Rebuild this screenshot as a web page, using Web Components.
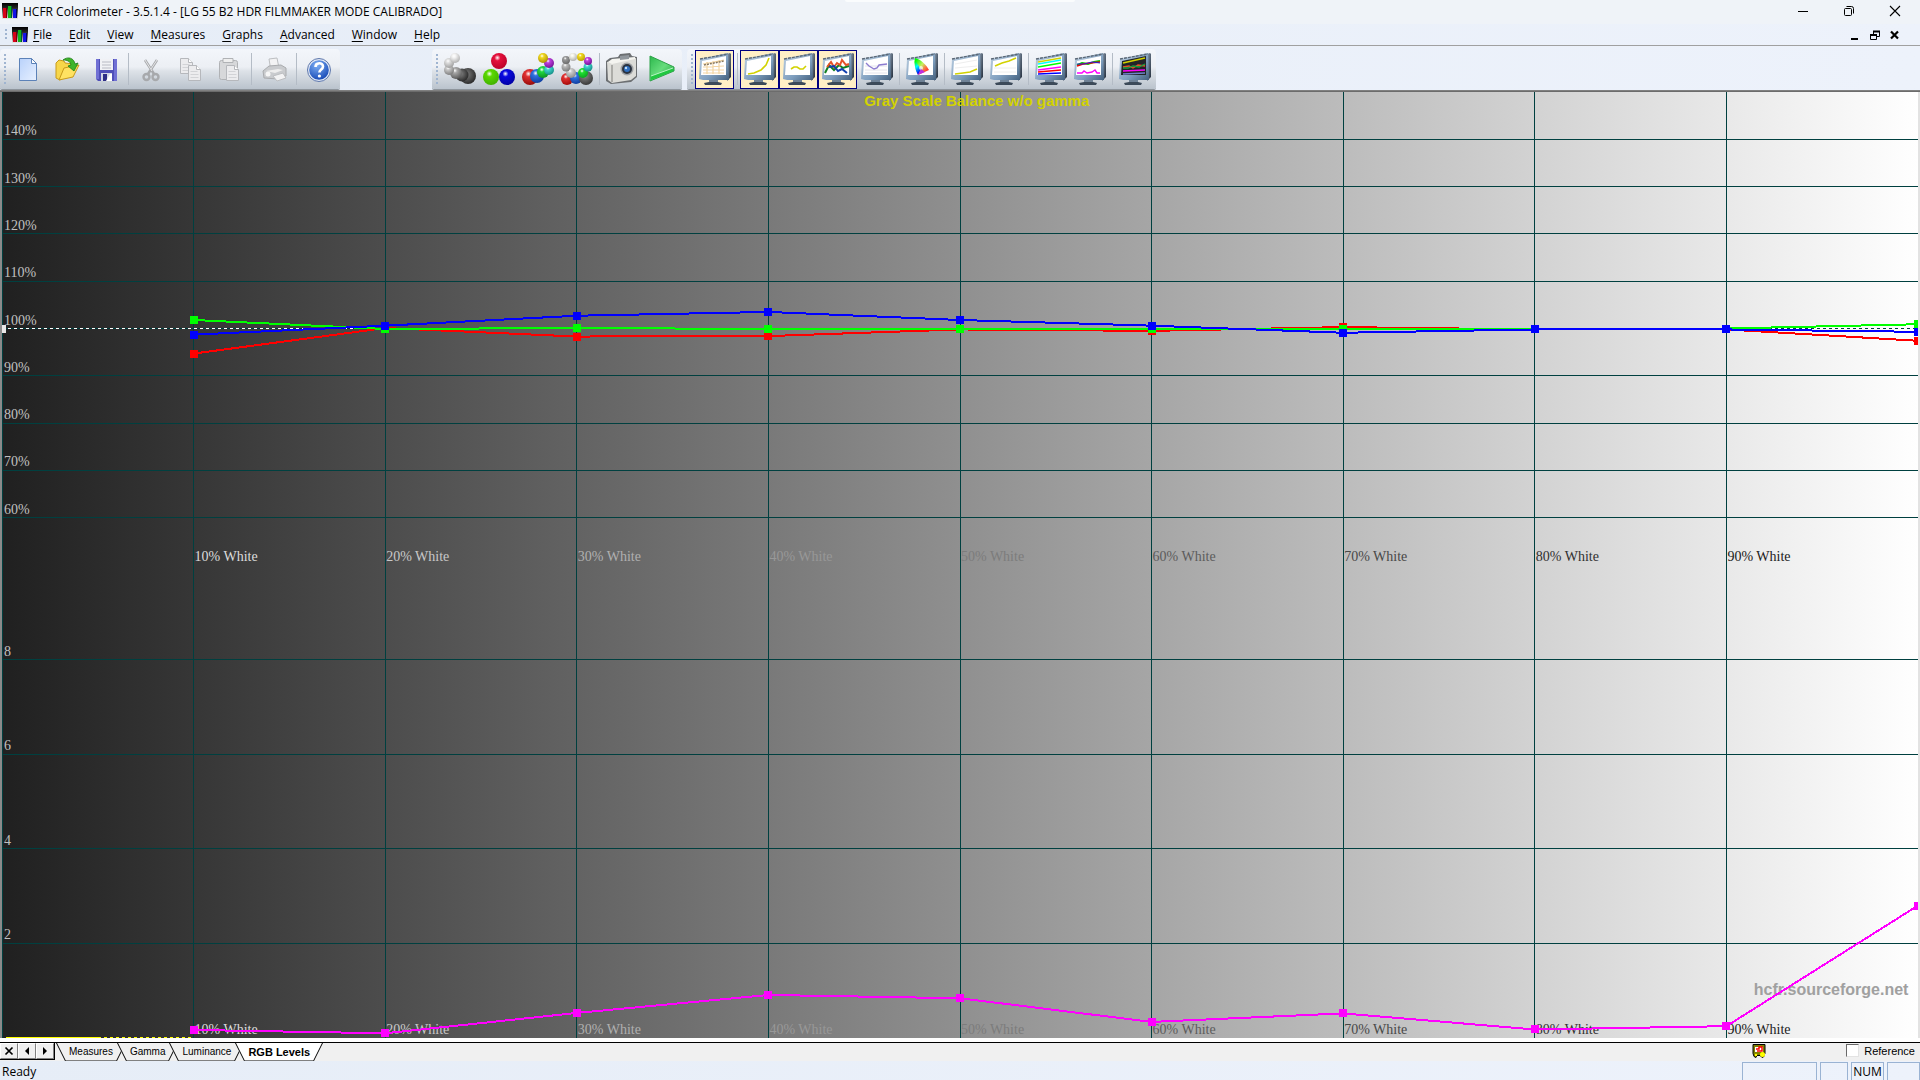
<!DOCTYPE html>
<html lang="en">
<head>
<meta charset="utf-8">
<title>HCFR Colorimeter</title>
<style>
  html, body { height: 100%; margin: 0; }
  body { font: 12px/16px "Open Sans", sans-serif; color: #000; background: #ebf1fa; }
</style>
</head>
<body>
<hc-app></hc-app>
<script>
const define = (name, html, setup) => {
  const tpl = document.createElement('template');
  tpl.innerHTML = html;
  customElements.define(name, class extends HTMLElement {
    connectedCallback() {
      if (this.shadowRoot) return;
      this.attachShadow({ mode: 'open' }).append(tpl.content.cloneNode(true));
      if (setup) setup(this, this.shadowRoot);
    }
  });
};

/* ---------- icons ---------- */
const ball = (x, y, r, c, d) => {
  const id = 'b' + c.slice(1) + d.slice(1);
  return `<radialGradient id="${id}" cx=".4" cy=".3" r=".75"><stop offset="0" stop-color="#fff"/><stop offset=".25" stop-color="${c}"/><stop offset="1" stop-color="${d}"/></radialGradient><circle cx="${x}" cy="${y}" r="${r}" fill="url(#${id})"/>`;
};
const line = (pts, c, w = 1.3) => `<polyline points="${pts}" fill="none" stroke="${c}" stroke-width="${w}"/>`;
const monitor = (inner, bg = '#fff') => `
  <linearGradient id="bz" x2="1" y2="1"><stop offset="0" stop-color="#c3d4e4"/><stop offset=".6" stop-color="#7f9fbf"/><stop offset="1" stop-color="#44617e"/></linearGradient>
  <linearGradient id="sd" x2="1" y2="1"><stop offset="0" stop-color="#8b9caf"/><stop offset="1" stop-color="#1f2a38"/></linearGradient>
  <path d="M5 30l5-1v-3h9v3l4 1-1 2H6z" fill="#3c4a59"/><path d="M10 26h9v3h-9z" fill="#6f8296"/>
  <path d="M28 1l3-1 1 1v23l-4 4z" fill="url(#sd)"/>
  <path d="M1 6L29 0l1 27H4L0 26z" fill="url(#bz)"/>
  <path d="M1 6L29 1" stroke="#5b6876" stroke-width="1.4" stroke-dasharray="3 1"/>
  <path d="M3 8l24-5v19H2z" fill="${bg}"/>${inner}`;
const page = (x, y) => `<path d="M${x} ${y}h8l4 4v11h-12z" fill="#ececee" stroke="#b6b8bc"/><path d="M${x + 8} ${y}v4h4" fill="#fff" stroke="#b6b8bc"/><path d="M${x + 2} ${y + 6}h7M${x + 2} ${y + 9}h8M${x + 2} ${y + 12}h8" stroke="#d2d3d6"/>`;
const ICONS = {
  logo: ['0 0 16 16', `<linearGradient id="g" x2="0" y2="1"><stop offset="0"/><stop offset=".3" stop-color="#222"/><stop offset="1" stop-color="#e8e8e8"/></linearGradient><path d="M0 0h16v16H0z" fill="url(#g)"/><path d="M1 5h4v10H1z" fill="#d80018"/><path d="M4 5h1v10H4z" fill="#700"/><path d="M6 3h4v12H6z" fill="#12b41c"/><path d="M9 3h1v12H9z" fill="#053"/><path d="M11 6h4v9h-4z" fill="#1414e6"/><path d="M14 6h1v9h-1z" fill="#006"/>`],
  'new': ['0 0 32 32', `<linearGradient id="g" x2="1" y2="1"><stop offset="0" stop-color="#b9d2fb"/><stop offset="1" stop-color="#e7f0ff"/></linearGradient><path d="M7.500 5.500h12l5 5v17h-17z" fill="url(#g)" stroke="#5c82b8"/><path d="M19.500 5.500v5h5z" fill="#fff" stroke="#5c82b8"/>`],
  open: ['0 0 32 32', `<path d="M5 10l3-3 5 1 1 2 9 1v5L9 27l-4-2z" fill="#f7d64a" stroke="#c79a1a"/><path d="M8 27l5-12 15-3-6 12z" fill="#ffe262" stroke="#c79a1a"/><path d="M12 7c5-4 11-2 12 4l3-1-4 8-6-5 3-1c-1-4-4-5-8-5z" fill="#3fb52b" stroke="#1d7d15" stroke-width=".8"/>`],
  save: ['0 0 32 32', `<path d="M6 6h21v22H8l-2-2z" fill="#4f4fb8"/><path d="M6 6h3v20H6zM24 6h3v22h-3z" fill="#7070d4"/><path d="M10 6h13v11H10z" fill="#f0f1f5"/><path d="M12 9h9M12 12h9M12 15h9" stroke="#b8bac4"/><path d="M11 20h11v8H11z" fill="#d4d8e6"/><path d="M13 21h4v7h-4z" fill="#2e2e86"/><path d="M16 28l4-7h2v7z" fill="#fff"/>`],
  cut: ['0 0 32 32', `<g fill="none" stroke="#a7a9ac"><path d="M10 7l9 14M22 7l-9 14" stroke-width="2.600"/><circle cx="11.500" cy="24" r="3" stroke-width="2.400"/><circle cx="20.500" cy="24" r="3" stroke-width="2.400"/></g><path d="M10 7l7 11M22 7l-6 9" stroke="#e6e6e8"/>`],
  copy: ['0 0 32 32', page(6.500, 5.500) + page(14.500, 12.500)],
  paste: ['0 0 32 32', `<rect x="6.500" y="7.500" width="18" height="19" rx="2" fill="#d7d8da" stroke="#b0b2b5"/><path d="M10 5.500h10v4H10z" fill="#eee" stroke="#b0b2b5"/>` + page(13.500, 12.500)],
  print: ['0 0 32 32', `<path d="M11 6l8-1 2 10-8 3z" fill="#f3f3f4" stroke="#bcbec1"/><path d="M5 18l6-5 12-1 5 3v8l-8 3-14-1z" fill="#c9cbce" stroke="#a9abae"/><path d="M8 18l12-2 5 1-8 3z" fill="#eee"/><circle cx="10" cy="21" r="2.500" fill="#f6f6f6"/><path d="M15 23l10-3 3 5-9 3z" fill="#f3f3f4" stroke="#bcbec1"/>`],
  help: ['0 0 32 32', `<radialGradient id="g" cx=".4" cy=".25" r=".8"><stop offset="0" stop-color="#7fb0f5"/><stop offset="1" stop-color="#1547b4"/></radialGradient><circle cx="16" cy="17" r="11.500" fill="#dfe7f5" stroke="#5f78ac"/><circle cx="16" cy="17" r="9.800" fill="url(#g)"/><path d="M12.500 14c0-5 7.500-5 7.500-.5 0 3-3.600 3-3.600 6" fill="none" stroke="#fff" stroke-width="2.600"/><circle cx="16.400" cy="23" r="1.600" fill="#fff"/>`],
  gray: ['0 0 32 32', `<radialGradient id="dk" cx=".4" cy=".4" r=".7"><stop offset="0" stop-color="#808080"/><stop offset="1" stop-color="#202020"/></radialGradient><circle cx="24" cy="23" r="8" fill="url(#dk)"/><circle cx="18" cy="22" r="6.500" fill="url(#dk)"/>` + ball(12, 20, 6, '#a8a8a8', '#555555') + ball(5, 17, 5, '#c8c8c8', '#777777') + ball(5, 10, 5, '#dedede', '#999999') + ball(11, 5, 5, '#f2f2f2', '#aaaaaa')],
  rgb: ['0 0 32 32', ball(16, 8, 8, '#e4103c', '#b80028') + ball(8, 24, 8, '#5ad800', '#3fae00') + ball(24, 24, 8, '#0808e0', '#0000a0')],
  sat: ['0 0 32 32', ball(8, 24, 8, '#e03030', '#900808') + ball(15, 23, 7, '#3070e0', '#0b3a9c') + ball(21, 19, 6, '#20d840', '#0a8c20') + ball(27, 17, 5, '#40d8d0', '#128880') + ball(27, 10, 5, '#c040e0', '#701090') + ball(21, 5, 5, '#f0d820', '#a88c00')],
  ring: ['0 0 32 32', ball(6, 26, 6, '#e03030', '#a00808') + ball(15, 25, 6, '#3070e0', '#0b3a9c') + ball(25, 25, 7, '#777777', '#333333') + ball(10, 20, 5, '#cccccc', '#888888') + ball(22, 20, 5, '#20e030', '#0aa020') + ball(5, 14, 4.500, '#b8b8b8', '#777777') + ball(27, 14, 4.500, '#40d8d0', '#128880') + ball(5, 7, 4, '#999999', '#666666') + ball(27, 8, 4, '#c040e0', '#701090') + ball(12, 4, 4, '#f2f2e8', '#aaaaaa') + ball(20, 4, 4, '#f0d820', '#b89c00')],
  camera: ['0 0 32 32', `<path d="M0 8l4-3 8-1 2-3 10-1 2 3 5 1v20l-6 5-20 2-5-3z" fill="#6c6f72"/><path d="M1 9l29-4v18l-5 4-19 3-4-3z" fill="#dcdcd8"/><path d="M2 9l4-3 23-2v2L6 11z" fill="#f4f4f0"/><path d="M6 12v17" stroke="#9c9c98" stroke-width="1.500"/><path d="M14 3l9-1v4l-9 1z" fill="#90969c"/><circle cx="21" cy="16" r="6.500" fill="#9ea1a4"/><circle cx="21" cy="16" r="5" fill="#2a3340"/><circle cx="21" cy="16" r="3" fill="#2e6fc0"/><circle cx="20" cy="15" r="1.200" fill="#bfe0ff"/>`],
  play: ['0 0 32 32', `<linearGradient id="g" x2="1" y2="1"><stop offset="0" stop-color="#2cb84c"/><stop offset=".5" stop-color="#66dc7c"/><stop offset="1" stop-color="#14a034"/></linearGradient><path d="M5 3l24 11v4L5 28z" fill="url(#g)" stroke="#2da348"/><path d="M6 23l22-8v3L6 27z" fill="#20c840"/><path d="M6 23l22-8" stroke="#b8f4c4"/>`],
  m1: ['0 0 32 32', monitor(`<path d="M4 11l21-4M4 14l21-1M4 17h21M4 20h21M8 9v12M14 8v13M20 7v14" stroke="#f3d6a4" stroke-width="1.200"/><path d="M5 12l20-4" stroke="#8a7a60" stroke-width="1.500" stroke-dasharray="2 1"/>`)],
  m2: ['0 0 32 32', monitor(line('4,21 10,20 17,17 22,12 25,5', '#d2d200', 1.600))],
  m3: ['0 0 32 32', monitor(line('8,16 11,14 14,14 17,16 20,16 23,13', '#d2d200', 1.600))],
  m4: ['0 0 32 32', monitor(line('3,20 7,12 12,17 17,12 21,15 27,13', '#108020', 2) + line('5,14 9,9 12,14 15,10 18,12 20,7 24,12 27,11', '#e65228', 2) + line('7,14 12,13 16,18 20,16 25,20', '#1040b0', 2))],
  m5: ['0 0 32 32', monitor(`<path d="M4 13h22M4 17h22M4 20h22" stroke="#e4e4ec"/>` + line('5,10 8,13 13,16 16,15 18,12 26,11', '#8c7cd0', 1.400))],
  m6: ['0 0 32 32', monitor(`<linearGradient id="c1" x2="1" y2="1"><stop offset=".1" stop-color="#0f0"/><stop offset=".45" stop-color="#c8f060"/><stop offset=".7" stop-color="#ff6040"/><stop offset="1" stop-color="#f00"/></linearGradient><linearGradient id="c2" x2=".3" y2="1"><stop offset=".2" stop-color="#0f0"/><stop offset=".55" stop-color="#0ff"/><stop offset="1" stop-color="#00f"/></linearGradient><path d="M9 5c6 1 12 8 14 12l-11 5C9 17 8 10 9 5z" fill="url(#c1)"/><path d="M9 5c1 5 4 8 6 11l-3 6C9 17 8 10 9 5z" fill="url(#c2)"/><circle cx="15" cy="15" r="2" fill="#fff" opacity=".7"/><path d="M12 22l3-6 4 3z" fill="#c030e0"/>`)],
  m7: ['0 0 32 32', monitor(`<path d="M4 11l22-4M4 15l22-2" stroke="#eee"/>` + line('4,21 12,20 19,19 26,16', '#d2d200', 1.600))],
  m8: ['0 0 32 32', monitor(`<path d="M4 15h22M4 19h22" stroke="#eee"/>` + line('5,13 12,10 19,8 26,5', '#d2d200', 1.600))],
  m9: ['0 0 32 32', monitor(line('3,9 26,5', '#d2d200') + line('3,11 26,7', '#0ff') + line('3,14 26,10', '#0f0') + line('3,17 26,14', '#f0f') + line('3,19 26,17', '#f00') + line('3,21 26,20', '#00f'))],
  m10: ['0 0 32 32', monitor(line('3,12 8,10 14,11 20,9 26,8', '#0c0', 1.800) + line('3,13 9,11 16,10 26,9', '#e00', 1.500) + line('3,11 10,11 18,9 26,10', '#22d', 1) + line('3,20 8,20 10,18 13,20 18,19 21,17 23,20 26,20', '#f0f', 1.400))],
  m11: ['0 0 32 32', monitor(line('4,10 26,5', '#d2d200', 1.500) + line('4,14 10,13 14,15 19,12 26,13', '#e65228') + line('4,15 9,15 14,13 20,14 26,11', '#18a040') + line('4,18 26,17', '#f0f') + line('4,21 26,20', '#7080d0'), '#222428')],
  min: ['0 0 12 12', `<path d="M1 6.500h10" stroke="#000"/>`],
  max: ['0 0 12 12', `<rect x="1.500" y="3.500" width="7" height="7" rx="1" fill="none" stroke="#000"/><path d="M3.500 1.500h5q2 0 2 2v5" fill="none" stroke="#000"/>`],
  close: ['0 0 12 12', `<path d="M1 1l10 10M11 1L1 11" stroke="#000" stroke-width="1.100"/>`],
  cmin: ['0 0 12 12', `<path d="M2 10h7" stroke="#000" stroke-width="2"/>`],
  cmax: ['0 0 12 12', `<path d="M4.500 6V2.500h6v5H8M1.500 5.500h6v5h-6z" fill="none" stroke="#000"/><path d="M4 2.500h7M1 6h7" stroke="#000" stroke-width="2"/>`],
  cclose: ['0 0 12 12', `<path d="M2 2.500l7 7M9 2.500l-7 7" stroke="#000" stroke-width="2.200"/>`],
  tx: ['0 0 12 12', `<path d="M2.500 2.500l7 7M9.500 2.500l-7 7" stroke="#000" stroke-width="1.700"/>`],
  tl: ['0 0 12 12', `<path d="M8 2v8L4 6z"/>`],
  tr: ['0 0 12 12', `<path d="M4 2v8l4-4z"/>`],
  chip: ['0 0 14 14', `<path d="M1 .5h12v9l-1 1v2l-2 1-2-2H5l-1 2-2-1-1-3z" fill="#808000" stroke="#000"/><path d="M3 3h8v5H3z" fill="#fff"/><path d="M4 5h3V3h3v4H5" fill="none" stroke="#f00" stroke-width="1.500"/><circle cx="10.500" cy="10.500" r="2.500" fill="#ff0"/><circle cx="4" cy="11" r="1.200" fill="#ff0"/>`]
};
define('hc-icon', `<style>:host{display:block;flex:none;width:32px;height:32px}svg{display:block;width:100%;height:100%}</style>`, (el, root) => {
  const [box, art] = ICONS[el.getAttribute('name')];
  root.innerHTML += `<svg viewBox="${box}" aria-hidden="true">${art}</svg>`;
});

/* ---------- title bar and menu bar ---------- */
define('hc-window-buttons', `<style>
  :host{display:flex;align-items:center}
  button{border:0;background:none;padding:0;width:46px;height:20px;display:grid;place-items:center}
  hc-icon{width:12px;height:12px}
  :host([small]) button{width:20px}
</style><button aria-label="Minimize"></button><button aria-label="Restore"></button><button aria-label="Close"></button>`, (el, root) => {
  const p = el.hasAttribute('small') ? 'c' : '';
  ['min', 'max', 'close'].forEach((n, i) => root.querySelectorAll('button')[i].innerHTML = `<hc-icon name="${p + n}"></hc-icon>`);
});
define('hc-title-bar', `<style>
  :host{display:flex;align-items:center;height:24px;box-sizing:border-box;padding-left:2px;background:#eff3f8;position:relative}
  :host::before{content:"";position:absolute;top:0;left:44%;right:44%;height:2px;border-radius:0 0 8px 8px;background:#fafcfd}
  .logo{width:16px;height:16px;margin-bottom:2px}
  span{flex:1;padding-left:5px;white-space:nowrap}
  hc-window-buttons{margin:0 2px 2px 0}
</style><hc-icon class="logo" name="logo"></hc-icon><span><slot></slot></span><hc-window-buttons></hc-window-buttons>`);
define('hc-menu-bar', `<style>
  :host{display:flex;align-items:center;height:22px;box-sizing:border-box;border-bottom:1px solid #a0a0a0;padding-left:5px;background:linear-gradient(90deg,#e6edf7,#edf2fb)}
  i{width:2px;height:12px;margin-right:5px;background:repeating-linear-gradient(#9fb4d0 0 2px,transparent 2px 4px)}
  .logo{width:16px;height:16px;margin-right:5px}
  nav{display:flex;gap:17px;flex:1}
  button{border:0;background:none;padding:0;font:inherit;color:inherit}
  u{text-underline-offset:2px}
  hc-window-buttons{margin-right:15px}
</style><i></i><hc-icon class="logo" name="logo"></hc-icon><nav></nav><hc-window-buttons small></hc-window-buttons>`, (el, root) => {
  root.querySelector('nav').innerHTML = el.getAttribute('items').split(',').map(t => `<button><u>${t[0]}</u>${t.slice(1)}</button>`).join('');
});

/* ---------- tool bars ---------- */
define('hc-tool-band', `<style>
  :host{display:flex;align-items:center;height:40px;padding:0 2px 0 8px;border-radius:4px 4px 2px 2px;background:linear-gradient(#f3f6fb,#eceff4 45%,#dde2e8 55%,#bac3cd);box-shadow:0 1px #8e959c;position:relative}
  :host::before{content:"";position:absolute;left:4px;top:5px;width:2px;height:30px;background:repeating-linear-gradient(#9fb4d0 0 2px,transparent 2px 4px)}
  button{box-sizing:border-box;width:39px;height:39px;padding:0;border:1px solid transparent;background:none;display:grid;place-items:center}
  button.on{border-color:#000080;background:#ffefc6}
  hr{width:1px;height:32px;margin:0 2px 0 3px;border:0;background:#b4bcc6;flex:none}
</style>`, (el, root) => {
  root.innerHTML += el.getAttribute('tools').split(' ').map(t => {
    if (t === '|') return '<hr>';
    const on = t.endsWith('*'), n = t.replace('*', '');
    return `<button class="${on ? 'on' : ''}" aria-label="${n}"><hc-icon name="${n}"></hc-icon></button>`;
  }).join('');
});
define('hc-tool-bar', `<style>:host{display:flex;height:45px;box-sizing:border-box;padding-top:3px;background:linear-gradient(90deg,#e6edf7,#edf2fb);border-bottom:1px solid #808080}
  ::slotted(.apart){margin-left:92px} ::slotted(.next){margin-left:5px}</style><slot></slot>`);

/* ---------- chart ---------- */
define('hc-level-chart', `<style>
  :host{display:block;flex:1;min-height:0;padding:0 2px;border-top:1px solid #6c6c6c;background:linear-gradient(90deg,#8a8a8a 50%,#e3e3e3 50%)}
  svg{display:block;width:100%;height:100%;background:linear-gradient(90deg,#202020,#fff);font:14px "Liberation Serif",serif;shape-rendering:crispEdges}
  .grid line{stroke:#004040}
  .axis{fill:#c0c0c0}
  .bold{font:bold 16px "Liberation Sans",sans-serif}
  .title{font-size:15px}
</style>`, (el, root) => {
  const X = i => i * 10 + '%';
  const level = v => (150 - v) / 2 + '%';
  const delta = v => 100 - v * 5 + '%';
  const series = [
    ['#f00', level, [94.7, 100.1, 98.3, 98.4, 99.8, 99.5, 100.3, 99.8, 99.8, 97.4]],
    ['#0f0', level, [101.8, 99.9, 100.1, 99.9, 99.9, 99.9, 100, 100, 100, 100.9]],
    ['#00f', level, [98.7, 100.6, 102.7, 103.5, 101.8, 100.6, 99.1, 99.8, 99.8, 99.3]],
    ['#f0f', delta, [.17, .1, .53, .91, .84, .34, .52, .18, .25, 2.8]]
  ];
  const inks = ['#dcdcdc', '#c8c8c8', '#b0b0b0', '#989898', '#7c7c7c', '#5c5c5c', '#484848', '#303030', '#202020'];
  let g = '<g class="grid"><line x1="0" x2="0" y1="0" y2="100%"/>', t = '';
  for (let i = 1; i < 10; i++) g += `<line x1="${X(i)}" x2="${X(i)}" y1="0" y2="100%"/>`;
  for (let v = 140; v >= 60; v -= 10) {
    g += `<line x1="0" x2="100%" y1="${level(v)}" y2="${level(v)}"/>`;
    t += `<text class="axis" x="2" y="${level(v)}" dy="-4">${v}%</text>`;
  }
  for (let v = 8; v > 0; v -= 2) {
    g += `<line x1="0" x2="100%" y1="${delta(v)}" y2="${delta(v)}"/>`;
    t += `<text class="axis" x="2" y="${delta(v)}" dy="-4">${v}</text>`;
  }
  inks.forEach((c, i) => ['50%', '100%'].forEach(y => t += `<text fill="${c}" x="${X(i + 1)}" dx="1" y="${y}" dy="-4">${(i + 1) * 10}% White</text>`));
  g += '</g><line x1="6" x2="100%" y1="25%" y2="25%" stroke="#fff" stroke-dasharray="3 3"/><rect x="0" y="25%" width="4" height="8" transform="translate(0 -4)" fill="#e8e8e8"/>';
  t += '<text class="bold title" fill="#d2d200" x="45%" y="14">Gray Scale Balance w/o gamma</text><text class="bold" fill="#a0a0a0" text-anchor="end" x="99.5%" y="95.5%">hcfr.sourceforge.net</text>';
  let s = '<g transform="translate(0 -1)"><line x1="4" x2="5%" y1="100%" y2="100%" stroke="#ff0"/><line x1="5%" x2="10%" y1="100%" y2="100%" stroke="#ff0" stroke-dasharray="3 3"/></g>';
  for (const [c, y, d] of series) {
    for (let i = 1; i < d.length; i++) s += `<line x1="${X(i)}" y1="${y(d[i - 1])}" x2="${X(i + 1)}" y2="${y(d[i])}" stroke="${c}" stroke-width="2"/>`;
    d.forEach((v, i) => s += `<rect x="${X(i + 1)}" y="${y(v)}" width="8" height="8" transform="translate(-4 -4)" fill="${c}"/>`);
  }
  root.innerHTML += `<svg role="img" aria-label="RGB levels">${g}${t}${s}</svg>`;
});

/* ---------- sheet tabs ---------- */
define('hc-tab', `<style>
  :host{display:block;margin-right:-9px;--face:#f0f0f0;position:relative}
  :host([selected]){--face:#fff;font-weight:bold;font-size:11px;z-index:1}
  button{display:flex;align-items:center;height:18px;padding:0;border:0;background:none;font:inherit;color:#000}
  svg{display:block;width:10px;height:18px;fill:var(--face)}
  span{box-sizing:border-box;height:18px;line-height:18px;padding:0 3px;background:var(--face);border-bottom:1px solid #808080}
</style><button role="tab"><svg><path d="M0 0h10v18H9z"/><path d="M.5 0l9 18" stroke="#000"/></svg><span><slot></slot></span><svg><path d="M0 0h10L1 18H0z"/><path d="M9.500 0l-9 18" stroke="#000"/></svg></button>`);
define('hc-tab-bar', `<style>
  :host{display:flex;height:23px;box-sizing:border-box;padding:4px 0 1px;background:linear-gradient(#fff 4px,#000 4px 5px,#f0f0f0 5px);font:10px "Liberation Sans",sans-serif}
  .nav{display:flex;border-right:1px solid #000;border-bottom:1px solid #000}
  .nav button{box-sizing:border-box;width:18px;height:16px;margin-top:1px;padding:0;display:grid;place-items:center;background:#f0f0f0;border:1px solid;border-color:#fff #808080 #808080 #fff}
  .nav hc-icon{width:12px;height:12px}
  .tabs{display:flex;flex:1;padding:1px 0 0 1px}
  .chip{width:14px;height:14px;margin:2px 80px 0 0}
  label{display:flex;align-items:center;gap:5px;padding-right:5px;font-size:11px}
  input{appearance:none;width:13px;height:13px;margin:0 0 1px;background:#fff;border:1px solid;border-color:#696969 #e3e3e3 #e3e3e3 #696969}
</style><div class="nav"><button aria-label="Close"><hc-icon name="tx"></hc-icon></button><button aria-label="Previous"><hc-icon name="tl"></hc-icon></button><button aria-label="Next"><hc-icon name="tr"></hc-icon></button></div>
<div class="tabs" role="tablist"><slot></slot></div><hc-icon class="chip" name="chip"></hc-icon><label><input type="checkbox">Reference</label>`);

/* ---------- status bar ---------- */
define('hc-status-bar', `<style>
  :host{display:flex;gap:3px;height:19px;line-height:21px;padding-left:2px;background:linear-gradient(90deg,#e6edf7,#edf2fb)}
  .text{flex:1}
  .pane{box-sizing:border-box;width:33px;margin-top:1px;border:1px solid #9ab3d3;border-bottom:0;text-align:center;line-height:18px}
  .wide{width:75px}.mid{width:28px}
</style><span class="text"><slot></slot></span><span class="pane wide"></span><span class="pane mid"></span><span class="pane">NUM</span><span class="pane"></span>`);

define('hc-app', `<style>:host{display:flex;flex-direction:column;height:100vh;overflow:hidden}</style>
<hc-title-bar>HCFR Colorimeter - 3.5.1.4 - [LG 55 B2 HDR FILMMAKER MODE CALIBRADO]</hc-title-bar>
<hc-menu-bar items="File,Edit,View,Measures,Graphs,Advanced,Window,Help"></hc-menu-bar>
<hc-tool-bar>
  <hc-tool-band tools="new open save | cut copy paste | print | help"></hc-tool-band>
  <hc-tool-band class="apart" tools="gray rgb sat ring | camera play"></hc-tool-band>
  <hc-tool-band class="next" tools="m1* | m2* m3* m4* m5 | m6 | m7 m8 | m9 m10 | m11"></hc-tool-band>
</hc-tool-bar>
<hc-level-chart></hc-level-chart>
<hc-tab-bar><hc-tab>Measures</hc-tab><hc-tab>Gamma</hc-tab><hc-tab>Luminance</hc-tab><hc-tab selected>RGB Levels</hc-tab></hc-tab-bar>
<hc-status-bar>Ready</hc-status-bar>`);
</script>
</body>
</html>
